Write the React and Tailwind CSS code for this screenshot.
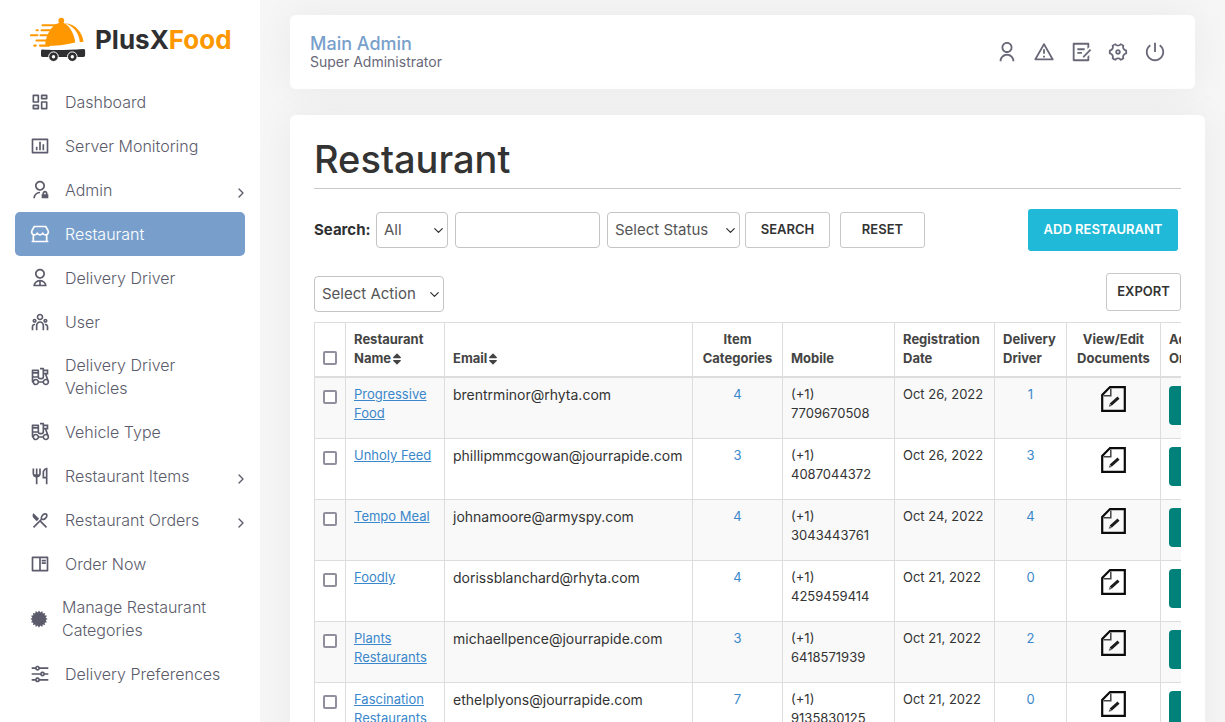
import React from "react";
import {
  RiAdminLine,
  RiAlertLine,
  RiBarChartBoxLine,
  RiBookReadLine,
  RiDashboardLine,
  RiDraftLine,
  RiEqualizerLine,
  RiRestaurant2Line,
  RiRestaurantLine,
  RiSettings4Line,
  RiShutDownLine,
  RiStore2Line,
  RiTakeawayLine,
  RiTeamLine,
  RiUser2Line,
  RiUserLine,
} from "react-icons/ri";
import { FaSort } from "react-icons/fa";
import { ChevronDown, ChevronRight } from "lucide-react";

function Starburst({ className }) {
  const points = Array.from({ length: 32 }, (_, i) => {
    const r = i % 2 ? 9 : 11.5;
    const a = (i * Math.PI) / 16;
    return `${(12 + r * Math.sin(a)).toFixed(2)},${(12 - r * Math.cos(a)).toFixed(2)}`;
  }).join(" ");
  return (
    <svg viewBox="0 0 24 24" className={className} fill="currentColor" aria-hidden="true">
      <polygon points={points} />
    </svg>
  );
}

const NAV = [
  { label: "Dashboard", icon: RiDashboardLine },
  { label: "Server Monitoring", icon: RiBarChartBoxLine },
  { label: "Admin", icon: RiAdminLine, more: true },
  { label: "Restaurant", icon: RiStore2Line, active: true },
  { label: "Delivery Driver", icon: RiUser2Line },
  { label: "User", icon: RiTeamLine },
  { label: "Delivery Driver Vehicles", icon: RiTakeawayLine },
  { label: "Vehicle Type", icon: RiTakeawayLine },
  { label: "Restaurant Items", icon: RiRestaurantLine, more: true },
  { label: "Restaurant Orders", icon: RiRestaurant2Line, more: true },
  { label: "Order Now", icon: RiBookReadLine },
  { label: "Manage Restaurant Categories", icon: Starburst, tight: true },
  { label: "Delivery Preferences", icon: RiEqualizerLine },
];

const ROWS = [
  ["Progressive Food", "brentrminor@rhyta.com", 4, "7709670508", "Oct 26, 2022", 1],
  ["Unholy Feed", "phillipmmcgowan@jourrapide.com", 3, "4087044372", "Oct 26, 2022", 3],
  ["Tempo Meal", "johnamoore@armyspy.com", 4, "3043443761", "Oct 24, 2022", 4],
  ["Foodly", "dorissblanchard@rhyta.com", 4, "4259459414", "Oct 21, 2022", 0],
  ["Plants Restaurants", "michaellpence@jourrapide.com", 3, "6418571939", "Oct 21, 2022", 2],
  ["Fascination Restaurants", "ethelplyons@jourrapide.com", 7, "9135830125", "Oct 21, 2022", 0],
];

const ACTIONS = [
  ["Profile", RiUserLine],
  ["Alerts", RiAlertLine],
  ["Notes", RiDraftLine],
  ["Settings", RiSettings4Line],
  ["Log out", RiShutDownLine],
];

function Logo() {
  return (
    <a href="#" className="flex items-center gap-[9px] pl-[30px] pt-[17px]">
      <svg viewBox="0 0 56 46" className="h-[46px] w-14" aria-hidden="true">
        <g stroke="#ff9800" strokeWidth="2.1" strokeLinecap="round" fill="none">
          <path d="M12.5 8.3H26M6.6 13.2h1.2M11.6 13.2H24M1 18.3h6.4M10.5 18.3H20M6.5 23.5H18M4.3 28.6h1.4M10 28.6h9" />
        </g>
        <circle cx="31.3" cy="3.7" r="2.9" fill="#ff9800" />
        <path d="M15 29c.6-6.600 2-11.700 5.200-16C23 9.200 26.300 6.200 31 5.600c4 .2 7.400 3 9.900 7.200 2.600 4.200 4 8.600 4.300 12.600C36 27.600 25.500 29 15 29z" fill="#ff9800" />
        <path d="M34.500 6.300c5.600.2 10.300 2.500 13.700 6.400 3 3.500 4.800 7.600 5.300 12l-3.700.5c-.4-4.300-1.700-8.200-4.400-11.600-2.900-3.700-6.400-6.300-10.900-7.300z" fill="#ff9800" />
        <path d="M12.500 32.500c9.500.9 27 .4 41-.5 1 0 1.600.7 1.600 1.600v4.700c0 1-.7 1.600-1.600 1.600h-41c-.9 0-1.500-.6-1.500-1.600V34c0-.9.6-1.500 1.500-1.500z" fill="#2f2f31" />
        <g fill="#2f2f31" stroke="#fff" strokeWidth="1">
          <circle cx="23.500" cy="39.700" r="4.800" />
          <circle cx="42.300" cy="39.700" r="4.800" />
        </g>
        <circle cx="23.500" cy="39.700" r="1.700" fill="#fff" />
        <circle cx="42.300" cy="39.700" r="1.700" fill="#fff" />
      </svg>
      <span className="text-[26px] font-bold leading-8 text-[#2f2f31]">
        PlusX<span className="text-[#ff9800]">Food</span>
      </span>
    </a>
  );
}

function Sidebar() {
  return (
    <aside className="w-[260px] shrink-0 bg-white">
      <Logo />
      <nav className="mt-[17px] px-[15px]">
        {NAV.map(({ label, icon: Icon, more, active, tight }) => (
          <a
            key={label}
            href="#"
            className={`flex min-h-11 items-center rounded-[5px] py-[10px] pl-[15px] text-base/[23px] font-light ${
              active ? "bg-[#789fcc] text-white" : "text-[#5b5b6b]"
            } ${tight ? "gap-[14px]" : "gap-[15px]"}`}
          >
            <Icon className={`shrink-0 ${tight ? "size-[18px]" : "size-5"}`} />
            <span className="w-[164px]">{label}</span>
            {more && <ChevronRight className="mt-[6px] -mr-1 ml-auto size-4 shrink-0" />}
          </a>
        ))}
      </nav>
    </aside>
  );
}

function DocumentIcon() {
  return (
    <svg viewBox="0 0 25 26" className="h-[26px] w-[25px]" aria-hidden="true">
      <path d="M9 1.100h14.800v23.700H1.200V9z" fill="none" stroke="#0b0b0b" strokeWidth="2.200" />
      <path d="M9.800 2.500v7.300H2.500" fill="none" stroke="#444" strokeWidth="1.500" />
      <path d="M10.800 17.600l5.600-5" fill="none" stroke="#1c1c1c" strokeWidth="3" strokeLinecap="square" />
      <path d="M7.700 20.800l1-2.900 2 2z" fill="#555" />
    </svg>
  );
}

function Select({ id, label, width, children }) {
  return (
    <span className={`relative flex items-center ${width}`}>
      <select
        id={id}
        aria-label={label}
        className="h-9 w-full appearance-none rounded-[4px] border border-[#c4c4c4] bg-white pl-[7px] text-[15px] text-[#555]"
      >
        {children}
      </select>
      <ChevronDown className="pointer-events-none absolute right-[2px] size-[15px] text-[#333]" />
    </span>
  );
}

const CHECK =
  "block size-[14px] appearance-none rounded-[2px] border-2 border-[#8f8f9d] bg-white checked:bg-[#789fcc]";
const BUTTON = "rounded-[3px] border border-[#c8c8c8] bg-white text-[13px] font-semibold text-[#333]";
const CELL = "border border-[#ddd] px-2";

function RestaurantTable() {
  return (
    <div className="overflow-x-auto">
      <table className="w-[956px] table-fixed border-collapse text-[13px] leading-[19px] text-[#333]">
        <colgroup>
          <col className="w-[31px]" />
          <col className="w-[99px]" />
          <col className="w-[248px]" />
          <col className="w-[90px]" />
          <col className="w-[112px]" />
          <col className="w-[100px]" />
          <col className="w-[72px]" />
          <col className="w-[94px]" />
          <col className="w-[110px]" />
        </colgroup>
        <thead>
          <tr className="h-[54px] border-b-2 border-[#ddd] text-left align-bottom text-[#444] [&>th]:pb-2">
            <th className={CELL}>
              <input type="checkbox" aria-label="Select all restaurants" className={`${CHECK} mb-[3px]`} />
            </th>
            <th className={CELL}>
              Restaurant Name <FaSort className="-ml-1 inline size-[14px]" />
            </th>
            <th className={CELL}>
              Email <FaSort className="-ml-1 inline size-[14px]" />
            </th>
            <th className={`${CELL} text-center`}>Item Categories</th>
            <th className={CELL}>Mobile</th>
            <th className={CELL}>Registration Date</th>
            <th className={CELL}>Delivery Driver</th>
            <th className={`${CELL} text-center`}>View/Edit Documents</th>
            <th className={CELL}>
              Add
              <br />
              Order
            </th>
          </tr>
        </thead>
        <tbody>
          {ROWS.map(([name, email, items, mobile, date, drivers]) => (
            <tr key={name} className="h-[61px] align-top first:h-[62px] odd:bg-[#f9f9f9] [&>td]:pt-[7px]">
              <td className={CELL}>
                <input type="checkbox" aria-label={`Select ${name}`} className={`${CHECK} mt-[5px]`} />
              </td>
              <td className={CELL}>
                <a href="#" className="text-[#3a87cb] underline">{name}</a>
              </td>
              <td className={`${CELL} text-sm/[19px]`}>{email}</td>
              <td className={`${CELL} text-center`}>
                <a href="#" className="text-[#3a87cb]">{items}</a>
              </td>
              <td className={CELL}>
                (+1)
                <br />
                {mobile}
              </td>
              <td className={`${CELL} whitespace-nowrap`}>{date}</td>
              <td className={`${CELL} text-center`}>
                <a href="#" className="text-[#3a87cb]">{drivers}</a>
              </td>
              <td className={CELL}>
                <a href="#" aria-label={`Documents of ${name}`} className="mx-auto mt-px block w-[25px]">
                  <DocumentIcon />
                </a>
              </td>
              <td className={CELL}>
                <button
                  type="button"
                  aria-label={`Add order for ${name}`}
                  className="mt-px block h-[39px] w-full rounded-[4px] bg-[#00817a]"
                />
              </td>
            </tr>
          ))}
        </tbody>
      </table>
    </div>
  );
}

export default function App() {
  return (
    <div className="flex min-h-screen bg-[#f6f6f6] font-['Inter','Liberation_Sans',sans-serif]">
      <Sidebar />
      <main className="min-w-0 flex-1 pl-[30px] pr-5 pt-[15px]">
        <header className="mr-[10px] flex h-[74px] items-center justify-between rounded-md bg-white pl-5 pr-[29px] shadow-[0_0_40px_rgba(0,0,0,0.055)]">
          <div>
            <div className="text-lg/5 font-medium text-[#789fcc]">Main Admin</div>
            <div className="text-sm/4 text-[#686878]">Super Administrator</div>
          </div>
          <div className="flex gap-[15px] text-[#686878]">
            {ACTIONS.map(([label, Icon]) => (
              <button key={label} type="button" aria-label={label}>
                <Icon className="size-[22px]" />
              </button>
            ))}
          </div>
        </header>

        <section className="mt-[26px] rounded-md bg-white px-6 pb-6 pt-5 shadow-[0_0_40px_rgba(0,0,0,0.055)]">
          <h1 className="border-b border-[#c8c8c8] pb-[5px] text-[38px] font-medium leading-[48px] text-[#333]">
            Restaurant
          </h1>

          <form className="mt-5 flex h-[42px] items-center" onSubmit={(e) => e.preventDefault()}>
            <label htmlFor="field" className="w-[62px] text-[15px] font-bold text-[#2f2f31]">Search:</label>
            <Select id="field" width="w-[72px]">
              <option>All</option>
            </Select>
            <input
              type="text"
              aria-label="Search text"
              className="ml-[7px] mr-[7px] h-9 w-[145px] rounded-[4px] border border-[#c4c4c4] bg-white px-2 text-[15px] text-[#555]"
            />
            <Select label="Status" width="w-[133px]">
              <option>Select Status</option>
            </Select>
            <button type="submit" className={`${BUTTON} ml-[5px] h-9 w-[85px]`}>SEARCH</button>
            <button type="reset" className={`${BUTTON} ml-[10px] h-9 w-[85px]`}>RESET</button>
            <button
              type="button"
              className="ml-auto mr-[3px] h-[42px] w-[150px] rounded-[3px] bg-[#20b9d8] text-[13px] font-semibold text-white"
            >
              ADD RESTAURANT
            </button>
          </form>

          <div className="mb-[10px] mt-[22px] flex items-end justify-between">
            <Select label="Action" width="w-[130px]">
              <option>Select Action</option>
            </Select>
            <button type="button" className={`${BUTTON} mb-px h-[38px] w-[75px]`}>EXPORT</button>
          </div>

          <RestaurantTable />
        </section>
      </main>
    </div>
  );
}
